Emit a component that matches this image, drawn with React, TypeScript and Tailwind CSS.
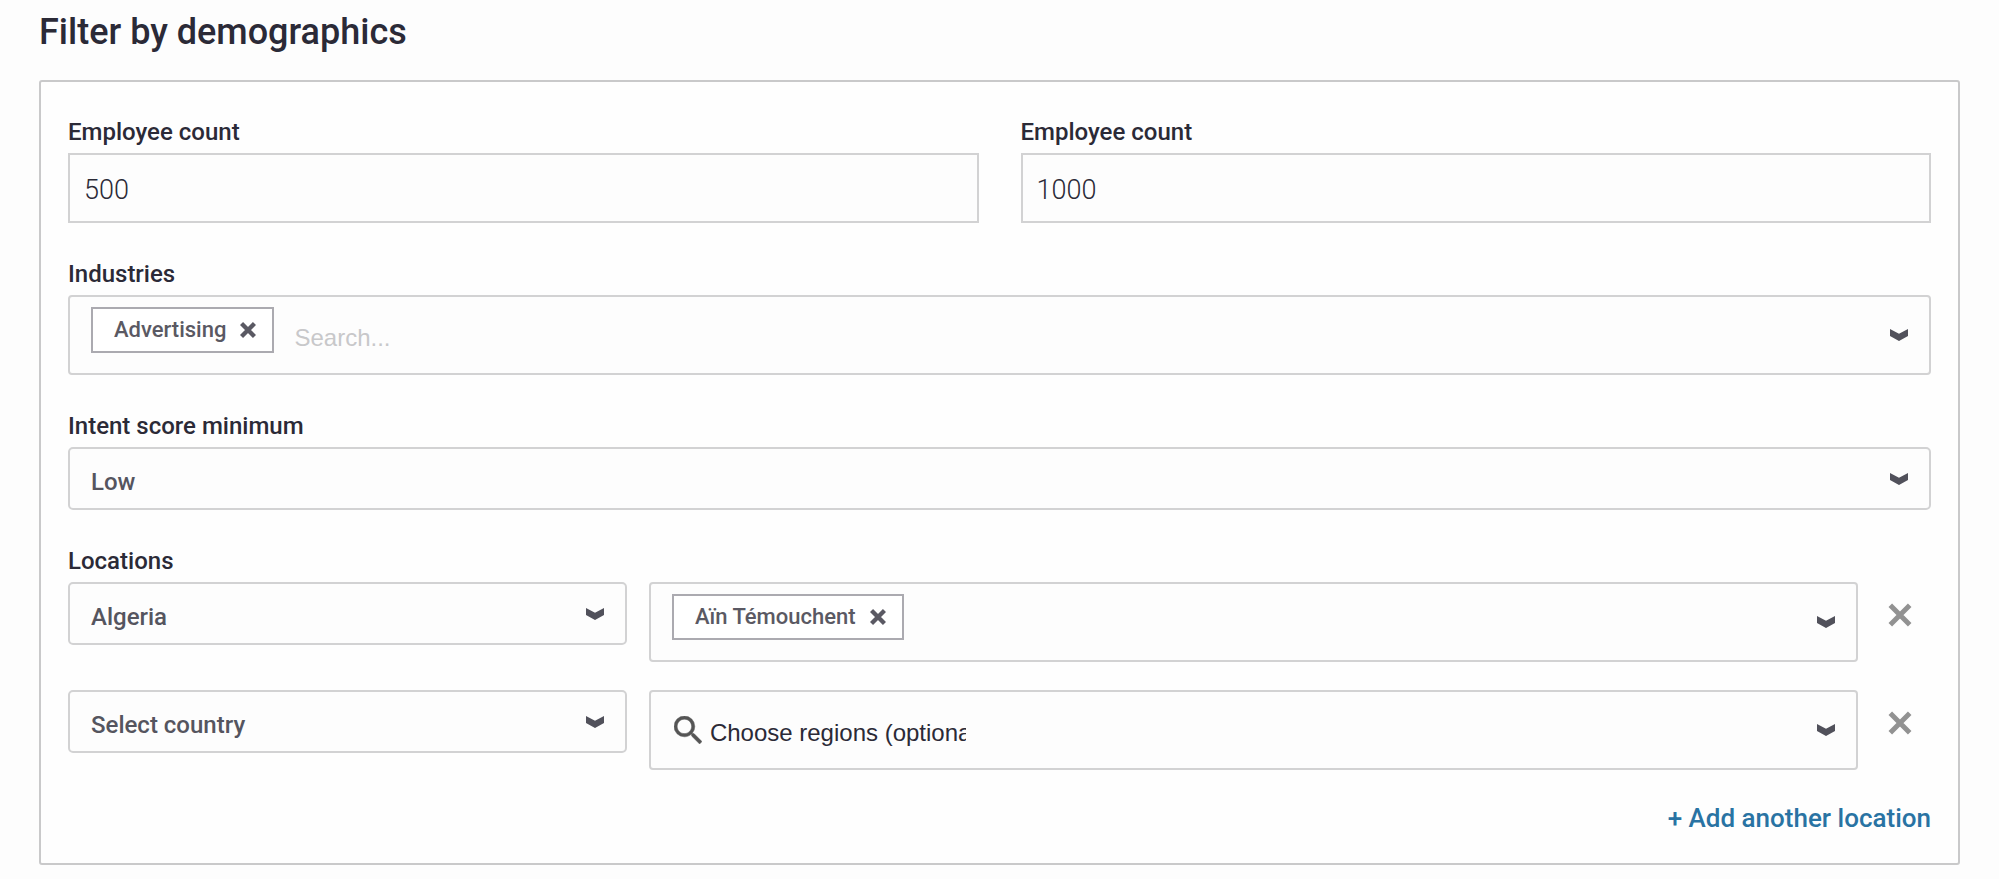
import type { ReactNode } from "react";

const LABEL = "mb-[7px] block text-[24px] leading-[28px] font-medium text-[#2b2a37]";
const BOX = "border-2 border-[#d2d2d3] bg-[#fdfdfd]";

function Chevron({ className }: { className: string }) {
  return (
    <svg
      className={`pointer-events-none absolute top-1/2 h-3 w-[18px] -translate-y-1/2 ${className}`}
      viewBox="0 0 18 12"
      aria-hidden="true"
    >
      <path d="M0 0L9 4.8L18 0V7L9 12L0 7Z" fill="#51515b" />
    </svg>
  );
}

function Cross({ className }: { className: string }) {
  return (
    <svg className={className} viewBox="0 0 24 24" aria-hidden="true">
      <path d="M2.3 2.3L21.7 21.7M21.7 2.3L2.3 21.7" stroke="currentColor" />
    </svg>
  );
}

function NumberField({ id, value }: { id: string; value: string }) {
  return (
    <div>
      <label htmlFor={id} className={LABEL}>
        Employee count
      </label>
      <input
        id={id}
        type="text"
        inputMode="numeric"
        defaultValue={value}
        className={`${BOX} block h-[70px] w-full px-[14px] pt-1 text-[27px] font-light text-[#2b2a37] outline-none`}
      />
    </div>
  );
}

function SelectBox({ id, label, options }: { id: string; label?: string; options: string[] }) {
  return (
    <div className="relative">
      <select
        id={id}
        aria-label={label}
        className={`${BOX} block h-[63px] w-full appearance-none rounded-[5px] pt-[6px] pr-14 pl-[21px] text-[24px] font-medium text-[#55555f] outline-none`}
      >
        {options.map((option) => (
          <option key={option}>{option}</option>
        ))}
      </select>
      <Chevron className="right-[23px]" />
    </div>
  );
}

function MultiBox({ children }: { children: ReactNode }) {
  return (
    <div className={`${BOX} relative flex h-20 items-start rounded-[4px] px-[21px] pt-[10px]`}>
      {children}
      <Chevron className="right-[21px]" />
    </div>
  );
}

function Chip({ text }: { text: string }) {
  return (
    <span className="flex h-[46px] items-center gap-[14px] border-2 border-[#abaab0] bg-white pr-4 pl-[21px] text-[22px] leading-[28px] font-medium whitespace-nowrap text-[#5a5963]">
      {text}
      <button type="button" aria-label={`Remove ${text}`}>
        <Cross className="block size-4 stroke-[6.5]" />
      </button>
    </span>
  );
}

function LocationRow({ id, options, children }: { id: string; options: string[]; children: ReactNode }) {
  return (
    <div className="flex items-start gap-[22px]">
      <div className="w-[30%]">
        <SelectBox id={id} label="Country" options={options} />
      </div>
      <div className="min-w-0 flex-1">
        <MultiBox>{children}</MultiBox>
      </div>
      <button
        type="button"
        aria-label="Remove location"
        className="flex h-[66px] w-[51px] items-center pl-2 text-[#929292]"
      >
        <Cross className="size-6 stroke-[5]" />
      </button>
    </div>
  );
}

export default function App() {
  return (
    <main className="min-h-screen bg-[#fdfdfd] px-[39px] pt-[10px] font-[Roboto,sans-serif]">
      <h1 className="mb-[26px] text-[36px] leading-[44px] font-medium text-[#2b2a37]">
        Filter by demographics
      </h1>
      <form className="flex flex-col gap-[37px] rounded-[3px] border-2 border-[#c9c9ca] bg-[#fefefe] px-[27px] pt-9 pb-[27px]">
        <div className="grid grid-cols-2 gap-[42px]">
          <NumberField id="employees-min" value="500" />
          <NumberField id="employees-max" value="1000" />
        </div>
        <div>
          <label htmlFor="industries" className={LABEL}>
            Industries
          </label>
          <MultiBox>
            <Chip text="Advertising" />
            <input
              id="industries"
              type="text"
              placeholder="Search..."
              className="ml-5 h-[62px] w-64 bg-transparent font-['Liberation_Sans',sans-serif] text-[24px] text-[#2b2a37] outline-none placeholder:text-[#c8c8ca]"
            />
          </MultiBox>
        </div>
        <div>
          <label htmlFor="intent" className={LABEL}>
            Intent score minimum
          </label>
          <SelectBox id="intent" options={["Low", "Medium", "High"]} />
        </div>
        <div>
          <label htmlFor="country-1" className={LABEL}>
            Locations
          </label>
          <div className="flex flex-col gap-7">
            <LocationRow id="country-1" options={["Algeria"]}>
              <Chip text="Aïn Témouchent" />
            </LocationRow>
            <LocationRow id="country-2" options={["Select country", "Algeria"]}>
              <svg className="mt-[14px] ml-[2px] size-7 shrink-0" viewBox="3 3 17.5 17.5" aria-hidden="true">
                <path
                  fill="#555"
                  stroke="#555"
                  strokeWidth="0.3"
                  d="M15.5 14h-.79l-.28-.27A6.471 6.471 0 0 0 16 9.500 6.500 6.500 0 1 0 9.500 16c1.610 0 3.090-.59 4.230-1.570l.27.28v.79l5 4.990L20.490 19l-4.990-5zm-6 0C7.010 14 5 11.990 5 9.500S7.010 5 9.500 5 14 7.010 14 9.500 11.990 14 9.500 14z"
                />
              </svg>
              <input
                type="text"
                aria-label="Regions"
                placeholder="Choose regions (optional)"
                className="ml-2 h-[62px] w-64 bg-transparent font-['Liberation_Sans',sans-serif] text-[24px] text-[#2b2a37] outline-none placeholder:text-[#2b2a37]"
              />
            </LocationRow>
          </div>
          <div className="mt-[30px] flex justify-end">
            <button type="button" className="text-[26px] leading-[36px] font-medium text-[#2973a3]">
              + Add another location
            </button>
          </div>
        </div>
      </form>
    </main>
  );
}
